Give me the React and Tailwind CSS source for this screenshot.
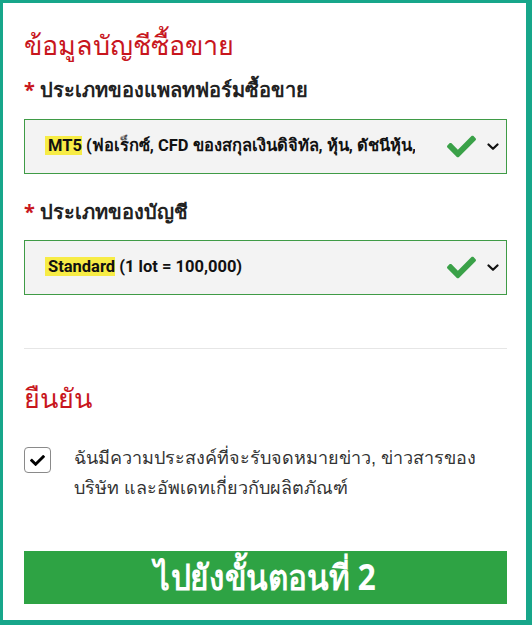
import React from "react";
import { FaCheck } from "react-icons/fa";

function Chevron() {
  return (
    <svg width="12" height="8" viewBox="0 0 12 8" className="shrink-0">
      <path d="M1.5 1.5 L6 5.8 L10.5 1.5" fill="none" stroke="#111" strokeWidth="2.2" strokeLinecap="round" strokeLinejoin="round" />
    </svg>
  );
}

function Select({ hl, rest }) {
  return (
    <div className="h-[55px] border border-[#3f9b46] bg-[#f3f3f3] flex items-center pl-[20px] pr-[7px]">
      <div
        className="flex-1 min-w-0 overflow-hidden whitespace-nowrap text-[16.5px] font-bold text-[#111]"
        style={{ fontFamily: 'Roboto, "Noto Sans", sans-serif' }}
      >
        <span className="bg-[#f7ec45] pl-[3px]">{hl}</span>
        <span>{rest}</span>
      </div>
      <FaCheck className="ml-[32px] text-[#3aa148] shrink-0" size={29} />
      <div className="ml-[11px]"><Chevron /></div>
    </div>
  );
}

export default function App() {
  return (
    <div
      className="w-[532px] h-[625px] bg-white border-[#17a68a] border-t-[3px] border-l-[3px] border-r-[6px] border-b-[5px] pl-[21px] pr-[19px] flex flex-col"
      style={{ fontFamily: '"Noto Sans", Roboto, "Liberation Sans", sans-serif' }}
    >
      <h1 className="mt-[22px] text-[27px] leading-[40px] font-medium text-[#c8161d]">ข้อมูลบัญชีซื้อขาย</h1>
      <div className="mt-[10px] text-[20px] leading-[30px] font-bold text-[#222]">
        <span className="text-[#c8161d]">*</span> ประเภทของแพลทฟอร์มซื้อขาย
      </div>
      <div className="mt-[14px]">
        <Select hl="MT5" rest=" (ฟอเร็กซ์, CFD ของสกุลเงินดิจิทัล, หุ้น, ดัชนีหุ้น, โลหะ และพลังงาน)" />
      </div>
      <div className="mt-[23px] text-[20px] leading-[30px] font-bold text-[#222]">
        <span className="text-[#c8161d]">*</span> ประเภทของบัญชี
      </div>
      <div className="mt-[13px]">
        <Select hl="Standard" rest=" (1 lot = 100,000)" />
      </div>
      <div className="mt-[53px] h-px bg-[#e6e6e6]" />
      <h2 className="mt-[29px] text-[27px] leading-[40px] font-medium text-[#c8161d]">ยืนยัน</h2>
      <div className="mt-[25px] flex items-start">
        <div className="mt-[4px] w-[27px] h-[26px] shrink-0 rounded-[4px] border border-[#8a8a8a] bg-white flex items-center justify-center">
          <FaCheck size={15} className="text-black" />
        </div>
        <p className="ml-[23px] text-[18px] leading-[30px] text-[#333]" style={{ fontFamily: '"Liberation Sans", Arial, sans-serif' }}>
          ฉันมีความประสงค์ที่จะรับจดหมายข่าว, ข่าวสารของ บริษัท และอัพเดทเกี่ยวกับผลิตภัณฑ์
        </p>
      </div>
      <button className="mt-[48px] h-[53px] w-full bg-[#2ea344] text-white flex items-center justify-center">
        <span className="inline-block text-[35px] font-bold scale-x-[0.9]">ไปยังขั้นตอนที่ 2</span>
      </button>
    </div>
  );
}
